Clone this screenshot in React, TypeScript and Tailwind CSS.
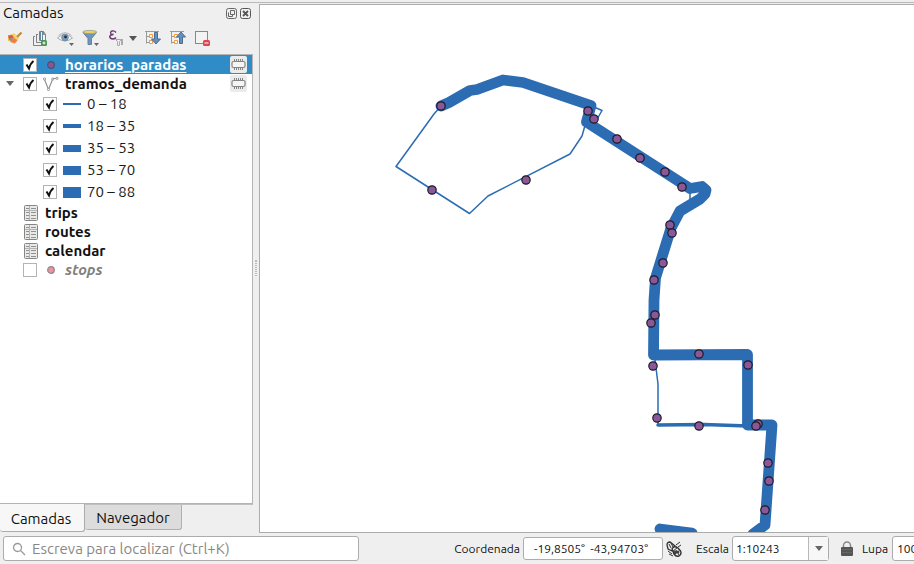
import { useId, useState } from "react";
import type { ReactNode } from "react";

const FRAME = "border border-[#acacac] rounded-[3px] bg-white";

function CheckBox({ label, checked }: { label: string; checked: boolean }) {
  return (
    <span className="relative block size-[14px] shrink-0">
      <input
        type="checkbox"
        aria-label={label}
        defaultChecked={checked}
        className="peer block size-[14px] appearance-none border border-[#b4b4b4] bg-white"
      />
      <svg
        viewBox="0 0 14 14"
        className="pointer-events-none absolute inset-0 hidden size-[14px] peer-checked:block"
        fill="none"
        stroke="#111"
        strokeWidth="2"
      >
        <path d="M3.500 6.500 6 10.500C7 7 8.500 4.500 10.500 3" />
      </svg>
    </span>
  );
}

function PointSymbol({ fill, stroke }: { fill: string; stroke: string }) {
  return (
    <svg viewBox="0 0 16 16" className="size-4 shrink-0">
      <circle cx="8" cy="8" r="3.300" fill={fill} stroke={stroke} strokeWidth="1.200" />
    </svg>
  );
}

function LineSymbol() {
  return (
    <svg viewBox="0 0 16 16" className="size-4 shrink-0" fill="none" stroke="#8c8c8c">
      <path d="M1.500 3.500 5.500 13.500 9.500 3.500Q10 2.500 11 2.500H14" strokeWidth="1.100" />
      <g fill="#fff" strokeWidth="0.900">
        <circle cx="1.500" cy="3" r="1.100" />
        <circle cx="5.500" cy="13.500" r="1.100" />
        <circle cx="9.800" cy="3" r="1.100" />
        <circle cx="14" cy="2.300" r="1.100" />
      </g>
    </svg>
  );
}

function TableSymbol() {
  return (
    <svg viewBox="0 0 14 16" className="h-4 w-[14px] shrink-0">
      <rect x="0.500" y="0.500" width="13" height="15" rx="1" fill="#e9e9e7" stroke="#858585" />
      <path d="M1 5.500H13M5.500 1V15" stroke="#b4b4b4" />
      <path
        d="M2 3.500H5M7 3.500H12M2 7.500H5M7 7.500H12M2 10.500H5M7 10.500H12M2 13.500H5M7 13.500H12"
        stroke="#909090"
      />
    </svg>
  );
}

function MemoryButton({ layer }: { layer: string }) {
  return (
    <button
      type="button"
      aria-label={`Camada temporária ${layer}`}
      className="ml-auto flex h-[17px] w-[17px] shrink-0 items-center justify-center rounded-[2px] bg-[#ebebeb]"
    >
      <svg viewBox="0 0 15 13" className="h-[13px] w-[15px]" stroke="#858585">
        <path d="M3.500 1V12M5.500 1V12M7.500 1V12M9.500 1V12M11.500 1V12" />
        <rect x="1" y="3.500" width="13" height="6" rx="1.500" fill="#f5f5f5" strokeWidth="1.200" />
      </svg>
    </button>
  );
}

function Tool({ label, className, children }: { label: string; className: string; children: ReactNode }) {
  return (
    <button type="button" aria-label={label} className={`shrink-0 ${className}`}>
      <svg viewBox="0 0 18 18" className="size-[18px]" fill="none">
        {children}
      </svg>
    </button>
  );
}

function TreeGlyph() {
  return (
    <>
      <path d="M1.500 2V14.500M0 2.500H14M2 7.500H5M2 13.500H5" stroke="#9a9a9a" />
      <path d="M4.500 5.500H7.500V8.500H4.500ZM4.500 11.500H7.500V14.500H4.500Z" fill="#fff" stroke="#f29a3c" />
    </>
  );
}

function Toolbar() {
  return (
    <div className="flex h-8 items-center px-1.5" role="toolbar" aria-label="Camadas">
      <Tool label="Abrir estilo de camada" className="mr-2">
        <path d="M2 6.500 8 4.500 13 9 9 14.500 5.500 14 4 12.500 2 12Z" fill="#f3c552" />
        <path d="M2 6.500 6 6 8 9 3 10Z" fill="#e0574a" />
        <path d="M4 12 8 9 11.500 11.500 8.500 14.500Z" fill="#ee8043" />
        <path d="M2.500 10 7 9 5 12Z" fill="#7392b8" />
        <path d="M8.500 5.500 12.500 10" stroke="#f0d890" strokeWidth="2" />
        <path d="M11 8 15.500 3.500" stroke="#c08a3a" strokeWidth="2.200" />
      </Tool>
      <Tool label="Adicionar grupo" className="mr-[7px]">
        <path d="M1.500 7.500V16.500H10M4.500 5V13.500H9M1.500 7.500H3M4.500 5.500H6" stroke="#808080" />
        <path d="M7.500 2.500H11.500L13.500 5.500V11.500H7.500ZM11.500 2.500V5.500H13.500" stroke="#808080" fill="#f6f6f6" />
        <path d="M8.500 12V3Q9.500 1.500 10.500 3V11" stroke="#64889f" />
        <rect x="9" y="11" width="6" height="6" rx="1.500" fill="#4b9453" />
        <path d="M10.500 14H13.500M12 12.500V15.500" stroke="#fff" />
      </Tool>
      <Tool label="Gerenciar temas do mapa" className="mr-[7px]">
        <path d="M0.500 9Q8 2 15.500 9Q8 15 0.500 9Z" fill="#fafafa" stroke="#aaa" />
        <path d="M1.500 6.500Q8 1 14.500 6.500" stroke="#b0b0b0" />
        <circle cx="8" cy="8.500" r="3.300" fill="#7fa0bd" stroke="#6c8ca8" />
        <circle cx="8.500" cy="8" r="1.400" fill="#202d3b" />
        <path d="M12 14H17L14.500 17Z" fill="#666" />
      </Tool>
      <Tool label="Filtrar legenda" className="mr-[7px]">
        <path d="M1 3.500 6 9.500V15.500H9.500V9.500L14.500 3.500Z" fill="#6f95bd" stroke="#64829f" />
        <ellipse cx="7.800" cy="3" rx="7" ry="1.600" fill="#ecd25e" stroke="#9b9e8d" strokeWidth="0.800" />
        <path d="M12 14H17L14.500 17Z" fill="#666" />
      </Tool>
      <Tool label="Filtrar legenda por expressão" className="mr-1">
        <path
          d="M9 3.500Q7.500 1.500 5.300 2Q3 2.700 3.800 4.600Q4.500 5.700 6.500 5.500Q3 5.700 2.700 7.700Q3 10 6 10Q8 9.800 9 8.500"
          stroke="#693a70"
          strokeWidth="1.400"
        />
        <path d="M8.500 10.500 10.500 12.500V16.500H12.500V12.500L14.500 10.500Z" fill="#eee" stroke="#aaa" />
        <path d="M15 10V16" stroke="#aaa" strokeWidth="2" />
      </Tool>
      <button type="button" aria-label="Opções do filtro" className="mr-1 flex h-[18px] w-3 shrink-0 items-center">
        <svg viewBox="0 0 8 5" className="h-[5px] w-2" fill="#555">
          <path d="M0 0H8L4 5Z" />
        </svg>
      </button>
      <Tool label="Expandir tudo" className="mr-[7px]">
        <TreeGlyph />
        <path d="M9.500 3.500H12.500V10H15.500L11 15 6.500 10H9.500Z" fill="#668fba" stroke="#496e95" />
      </Tool>
      <Tool label="Recolher tudo" className="mr-[7px]">
        <TreeGlyph />
        <path d="M9.500 14.500V8H6.500L11 3 15.500 8H12.500V14.500Z" fill="#668fba" stroke="#496e95" />
      </Tool>
      <Tool label="Remover camada" className="">
        <rect x="0.500" y="2.500" width="12" height="12" fill="#f3f3f3" stroke="#888" />
        <rect x="8" y="11" width="7" height="6" rx="1.500" fill="#e04452" />
        <path d="M9.500 14H13.500" stroke="#fff" />
      </Tool>
    </div>
  );
}

const CLASSES = [
  { range: "0 – 18", bar: "h-0.5" },
  { range: "18 – 35", bar: "h-1" },
  { range: "35 – 53", bar: "h-[7px]" },
  { range: "53 – 70", bar: "h-[9px]" },
  { range: "70 – 88", bar: "h-[11px]" },
];

function LayerTree() {
  const [open, setOpen] = useState(true);
  return (
    <ul className="min-h-0 flex-1 overflow-hidden border-y border-r border-[#b4b4b4] bg-white">
      <li className="flex h-[19px] items-center bg-[#308cc6] pl-[23px] pr-[5px] text-white">
        <CheckBox label="horarios_paradas" checked />
        <span className="mx-1.5 flex">
          <PointSymbol fill="#8b5793" stroke="#4a4d75" />
        </span>
        <span className="text-[15px]/[18px] font-bold underline decoration-1 underline-offset-2">
          horarios_paradas
        </span>
        <MemoryButton layer="horarios_paradas" />
      </li>
      <li>
        <div className="flex h-[19px] items-center pl-1.5 pr-[5px]">
          <button
            type="button"
            aria-expanded={open}
            aria-label="tramos_demanda"
            onClick={() => setOpen(!open)}
            className="flex h-4 w-[17px] items-center"
          >
            <svg viewBox="0 0 8 5" className="h-[5px] w-2" fill="#666">
              <path d="M0 0H8L4 5Z" />
            </svg>
          </button>
          <CheckBox label="tramos_demanda" checked />
          <span className="mx-1.5 flex">
            <LineSymbol />
          </span>
          <span className="text-[15px]/[18px] font-bold">tramos_demanda</span>
          <MemoryButton layer="tramos_demanda" />
        </div>
        {open && (
          <ul>
            {CLASSES.map((c) => (
              <li key={c.range} className="flex h-[22px] items-center pl-[43px]">
                <CheckBox label={c.range} checked />
                <span className={`ml-1.5 mr-1.5 w-[18px] bg-[#2b6cb2] ${c.bar}`} />
                <span className="text-[15px]/[20px] text-[#1c1c1c]">{c.range}</span>
              </li>
            ))}
          </ul>
        )}
      </li>
      {["trips", "routes", "calendar"].map((name) => (
        <li key={name} className="flex h-[19px] items-center gap-[7px] pl-6">
          <TableSymbol />
          <span className="text-[15px]/[18px] font-bold">{name}</span>
        </li>
      ))}
      <li className="flex h-[19px] items-center pl-[23px]">
        <CheckBox label="stops" checked={false} />
        <span className="mx-1.5 flex">
          <PointSymbol fill="#ed91a0" stroke="#888" />
        </span>
        <span className="text-[15px]/[18px] font-bold italic text-[#808080]">stops</span>
      </li>
    </ul>
  );
}

function LayersPanel() {
  return (
    <aside className="flex w-[253px] shrink-0 flex-col">
      <header className="flex h-[19px] items-center pl-[3px] pr-0.5 pt-px">
        <h1 className="text-[15px]/[20px]">Camadas</h1>
        <button type="button" aria-label="Destacar painel" className="ml-auto mr-[3px]">
          <svg viewBox="0 0 11 11" className="size-[11px]" fill="none" stroke="#666">
            <rect x="0.500" y="0.500" width="10" height="10" rx="2" />
            <path d="M4.500 2.500H8.500V6.500H4.500ZM2.500 4.500V8.500H6.500V7" />
          </svg>
        </button>
        <button type="button" aria-label="Fechar painel">
          <svg viewBox="0 0 11 11" className="size-[11px]" fill="none" stroke="#555">
            <rect x="0.500" y="0.500" width="10" height="10" rx="2" />
            <path d="M3 3 8 8M8 3 3 8" strokeWidth="1.800" />
          </svg>
        </button>
      </header>
      <Toolbar />
      <LayerTree />
      <div role="tablist" className="flex h-[29px] items-start text-[15px]/[18px]">
        <button
          type="button"
          role="tab"
          aria-selected="true"
          className="h-7 w-[85px] rounded-b-[3px] border-b border-r border-[#acacac] bg-[#f7f7f7] pr-0.5 pt-0.5"
        >
          Camadas
        </button>
        <div className="flex-1 border-t border-[#c0c0c0]">
          <button
            type="button"
            role="tab"
            aria-selected="false"
            className="block h-[25px] w-[97px] rounded-b-[3px] border-b border-r border-[#b0b0b0] bg-[#dcdcdc] pt-0.5"
          >
            Navegador
          </button>
        </div>
      </div>
    </aside>
  );
}

const STOPS: [number, number][] = [
  [441, 106], [432, 190], [526, 180], [588, 111], [594, 119], [617, 139], [640, 158],
  [665, 172], [682, 187], [670, 225], [672, 233], [663, 263], [654, 280], [655, 315],
  [651, 323], [699, 354], [748, 365], [653, 366], [657, 418], [699, 426], [758, 424],
  [756, 426], [768, 463], [769, 481], [765, 510],
];

function MapCanvas() {
  return (
    <main className="min-w-0 flex-1 overflow-hidden border border-r-0 border-[#acacac] bg-white">
      <svg
        role="img"
        aria-label="Mapa"
        viewBox="260 5 654 527"
        width="654"
        height="527"
        className="block max-w-none"
        fill="none"
        stroke="#2b6cb2"
        strokeLinejoin="round"
        strokeLinecap="round"
      >
        <path
          d="M441 106 434 114 396 166.500 469.500 213.500 488 196 570 154 582 136 586 122M594 107 602 110.500 596 121M690 190V200L685 205M655 360 658 384V424"
          strokeWidth="1.500"
        />
        <path d="M658 425 704 424.500 748 426" strokeWidth="3.500" />
        <path
          d="M441 106 449 102.500 470 90.500 477 89.500 503 80 523 82.500 591 105.500 586.500 122 690 188.500 702 186.500 706 190 705 194 700 199 680 211 671 228 655.500 278 654 300 653.500 355 747.500 354.500V425H772L765 525 753 534M660 529 692 533"
          strokeWidth="10.800"
        />
        <g fill="#8a5799" stroke="#1e1a26" strokeWidth="1.200">
          {STOPS.map(([x, y]) => (
            <circle key={`${x}-${y}`} cx={x} cy={y} r="4.200" />
          ))}
        </g>
      </svg>
    </main>
  );
}

function StatusBar() {
  const id = useId();
  return (
    <footer className="flex h-[31px] shrink-0 items-center overflow-hidden pl-[3px] text-xs">
      <div className={`flex h-[25px] w-[356px] shrink items-center gap-1.5 pl-2 ${FRAME}`}>
        <svg viewBox="0 0 14 14" className="size-[14px] shrink-0" fill="none" stroke="#999" strokeWidth="1.300">
          <circle cx="5.500" cy="5.500" r="4" />
          <path d="M8.500 8.500 13 13" />
        </svg>
        <input
          type="text"
          aria-label="Localizar"
          placeholder="Escreva para localizar (Ctrl+K)"
          className="min-w-0 flex-1 bg-transparent text-[15px]/[18px] outline-none placeholder:text-[#888]"
        />
      </div>
      <div className="ml-auto flex shrink-0 items-center">
        <label htmlFor={`${id}-coord`} className="mr-[3px]">
          Coordenada
        </label>
        <input
          id={`${id}-coord`}
          type="text"
          defaultValue="-19,8505°  -43,94703°"
          className={`h-[23px] w-[140px] pr-1 text-center outline-none ${FRAME}`}
        />
        <button type="button" aria-label="Alternar extensão e posição do mouse" className="ml-[3px] mr-[14px]">
          <svg viewBox="0 0 16 16" className="size-4" fill="#eee" stroke="#333">
            <path d="M1 4Q1 1 4 1L9 5 6 10 2 8Z" strokeWidth="1.300" />
            <path d="M6 8Q8 4 12 7L14.500 10Q16 13 13 15Q10 16 8 13Z" strokeWidth="1.400" />
            <path d="M3 3 5 7M5 2 7 6M7 10 11 7M10 9 13 14M2 10 6 13M3 13 7 15M10 4 14 1M12 6 15 4" />
            <circle cx="9" cy="11.500" r="1.500" fill="#444" />
            <circle cx="12" cy="11" r="1" fill="#444" />
          </svg>
        </button>
        <label htmlFor={`${id}-scale`} className="mr-1 w-8">
          Escala
        </label>
        <span className="relative block">
          <select
            id={`${id}-scale`}
            className={`block h-[25px] w-[97px] appearance-none pl-[3px] outline-none ${FRAME}`}
          >
            <option>1:10243</option>
          </select>
          <span className="pointer-events-none absolute inset-y-px right-px flex w-5 items-center justify-center border-l border-[#b8b8b8] bg-[#f7f7f7]">
            <svg viewBox="0 0 8 5" className="h-[5px] w-2" fill="#666">
              <path d="M0 0H8L4 5Z" />
            </svg>
          </span>
        </span>
        <button type="button" aria-label="Bloquear escala" className="ml-3 mr-[9px]">
          <svg viewBox="0 0 12 15" className="h-[15px] w-3">
            <path d="M2.500 7V4.500a3.500 3.500 0 0 1 7 0V7" fill="none" stroke="#888" strokeWidth="1.500" />
            <rect x="0" y="6" width="12" height="9" rx="1" fill="#555" />
            <path d="M1 8.500H11M1 11.500H11" stroke="#666" />
          </svg>
        </button>
        <label htmlFor={`${id}-zoom`} className="mr-1 w-[26px]">
          Lupa
        </label>
        <div className="w-[22px] overflow-hidden">
          <input
            id={`${id}-zoom`}
            type="text"
            defaultValue="100%"
            className={`block h-[25px] w-[70px] pl-1 outline-none ${FRAME}`}
          />
        </div>
      </div>
    </footer>
  );
}

export default function App() {
  return (
    <div className="flex h-screen flex-col overflow-hidden bg-[#efefef] font-['Ubuntu','Noto_Sans',sans-serif] text-[#111]">
      <div className="h-[3px] shrink-0 border-b border-[#b8b8b8]" />
      <div className="flex min-h-0 flex-1">
        <LayersPanel />
        <div role="separator" className="flex w-1.5 shrink-0 items-center justify-center">
          <div className="h-4 w-0.5 border-x border-dotted border-[#bbb]" />
        </div>
        <div className="flex min-w-0 flex-1 pt-px">
          <MapCanvas />
        </div>
      </div>
      <StatusBar />
    </div>
  );
}
